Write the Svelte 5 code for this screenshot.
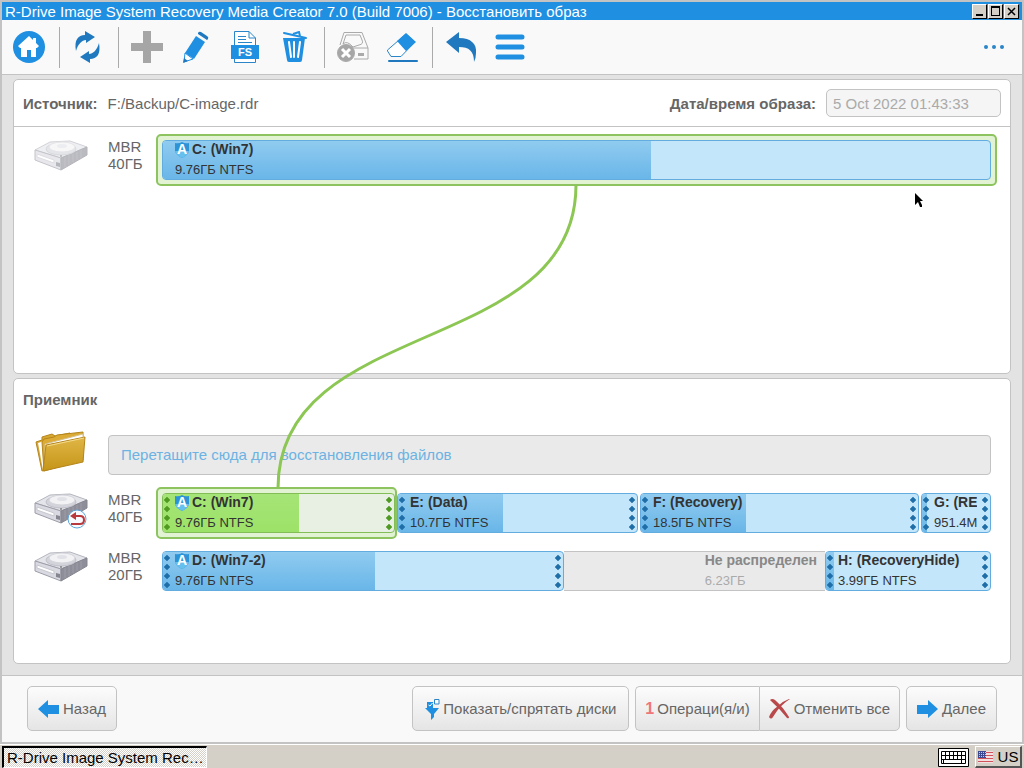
<script lang="ts">
	type Partition = {
		name: string;
		info: string;
		size: number;
		used: number;
		kind?: 'free' | 'target';
		system?: boolean;
		fixed?: boolean;
	};

	const source: Partition[] = [
		{ name: 'C: (Win7)', info: '9.76ГБ NTFS', size: 829, used: 59, system: true, fixed: true }
	];

	const disks: { label: string; size: string; restored?: boolean; gap: boolean; parts: Partition[] }[] = [
		{
			label: 'MBR',
			size: '40ГБ',
			restored: true,
			gap: true,
			parts: [
				{ name: 'C: (Win7)', info: '9.76ГБ NTFS', size: 233, used: 59, kind: 'target', system: true },
				{ name: 'E: (Data)', info: '10.7ГБ NTFS', size: 241, used: 44 },
				{ name: 'F: (Recovery)', info: '18.5ГБ NTFS', size: 279, used: 38 },
				{ name: 'G: (RE', info: '951.4M', size: 70, used: 7 }
			]
		},
		{
			label: 'MBR',
			size: '20ГБ',
			gap: false,
			parts: [
				{ name: 'D: (Win7-2)', info: '9.76ГБ NTFS', size: 402, used: 53, system: true },
				{ name: 'Не распределен', info: '6.23ГБ', size: 261, used: 0, kind: 'free' },
				{ name: 'H: (RecoveryHide)', info: '3.99ГБ NTFS', size: 166, used: 5 }
			]
		}
	];

	let imageDate = $state('5 Oct 2022 01:43:33');
	let workspace: HTMLElement;
	let width = $state(0);
	let height = $state(0);
	let link = $state('');

	function columns(parts: Partition[]) {
		return parts.map((p) => `minmax(0, ${p.size}fr)`).join(' ');
	}

	// curve between the source partition and the one it will be written to
	$effect(() => {
		if (!width || !height) return;
		const base = workspace.getBoundingClientRect();
		const from = workspace.querySelector('.part.origin')!.getBoundingClientRect();
		const to = workspace.querySelector('.part.target')!.getBoundingClientRect();
		const x1 = Math.floor(from.left + from.width / 2 - base.left);
		const y1 = from.bottom + 5 - base.top;
		const x2 = Math.floor(to.left + to.width / 2 - base.left);
		const y2 = to.top - 5 - base.top;
		const bend = (y2 - y1) * 0.57;
		link = `M${x1} ${y1} C${x1} ${y1 + bend} ${x2} ${y2 - bend} ${x2} ${y2}`;
	});
</script>

{#snippet dots()}
	<svg width="6" height="34" viewBox="0 0 6 34" fill="currentColor" aria-hidden="true">
		{#each [3, 12, 21, 30] as y}
			<path d="M3 {y - 3}L5 {y - 1}L6 {y}L5 {y + 1}L3 {y + 3}L1 {y + 1}L0 {y}L1 {y - 1}Z" stroke="currentColor" stroke-width=".5" />
		{/each}
	</svg>
{/snippet}

{#snippet part(p: Partition, origin: boolean)}
	<div class="part {p.kind ?? ''}" class:origin>
		<div class="used" style="width: {p.used}%"></div>
		{#if !p.fixed && p.kind !== 'free'}
			<span class="grip left">{@render dots()}</span>
			<span class="grip right">{@render dots()}</span>
		{/if}
		<div class="text">
			<div class="name">
				{#if p.system}
					<svg class="shield" width="14" height="17" viewBox="0 0 14 17" aria-hidden="true">
						<path d="M0 2Q4 3 7 1Q10 3 14 2V10Q13 14 7 17Q1 14 0 10Z" fill="#2c93d6" />
						<path d="M0 10H14Q13 14 7 17Q1 14 0 10Z" fill="#66c0ee" />
						<text x="7" y="13" text-anchor="middle" font-size="14" font-weight="bold" fill="#fff">A</text>
					</svg>
				{/if}
				{p.name}
			</div>
			<div class="info">{p.info}</div>
		</div>
	</div>
{/snippet}

{#snippet drive(faded: boolean, restored: boolean)}
	<svg class="drive" class:faded width="54" height="40" viewBox="0 0 54 40" aria-hidden="true">
		<path d="M1 10L16 2L36 1L53 7L27 18Z" fill="#e4e5ea" stroke="#b5b6be" stroke-linejoin="round" />
		<path d="M1 10L27 18V30L1 20Z" fill="#d9dae1" stroke="#9c9da8" stroke-linejoin="round" />
		<path d="M27 18L53 7V15L27 30Z" fill="#8d8e99" stroke="#85868f" stroke-linejoin="round" />
		<path d="M31 17V27M35 15V25M39 14V22M43 12V20M47 10V18" stroke="#9c9da7" />
		<ellipse cx="27" cy="9" rx="15" ry="6" fill="#d3d4db" stroke="#bfc0c8" />
		<ellipse cx="28" cy="7" rx="13" ry="5" fill="#f2f2f5" stroke="#d3d4da" />
		<ellipse cx="28" cy="6" rx="5" ry="2" fill="#e1e2e7" />
		<path d="M3 14L20 20V23L3 17Z" fill="#fff" stroke="#c7c8cf" />
		<path d="M22 22L26 23V27L22 26Z" fill="#85868f" />
		<path d="M26 16H28" stroke="#555" />
		{#if restored}
			<circle cx="43" cy="26" r="9" fill="#f7fbff" stroke="#5aa5dc" />
			<path d="M41 23H46Q50 23 50 27T46 31H37" fill="none" stroke="#b83a3d" stroke-width="2" />
			<path d="M42 19V27L36 23Z" fill="#b83a3d" />
		{/if}
	</svg>
{/snippet}

<div class="screen">
	<div class="window">
		<header class="titlebar">
			<span>R-Drive Image System Recovery Media Creator 7.0 (Build 7006) - Восстановить образ</span>
			<div class="controls">
				<button aria-label="Свернуть">
					<svg width="13" height="13" viewBox="0 0 13 13"><path d="M3 10H10" stroke="#000" stroke-width="2" /></svg>
				</button>
				<button aria-label="Развернуть">
					<svg width="13" height="13" viewBox="0 0 13 13"><path d="M2 1H11V11H2ZM3 3V10H10V3Z" fill-rule="evenodd" /></svg>
				</button>
				<button aria-label="Закрыть">
					<svg width="13" height="13" viewBox="0 0 13 13"><path d="M3 3L10 10M10 3L3 10" stroke="#000" stroke-width="1.500" /></svg>
				</button>
			</div>
		</header>

		<nav class="toolbar">
			<button aria-label="Домой">
				<svg width="32" height="32" viewBox="0 0 32 32">
					<circle cx="16" cy="16" r="16" fill="#1f8fe1" />
					<path d="M16 5L20 9V7H23V12L26 15L24 17H23V26H18V19H14V26H8V17H7L5 15Z" fill="#fff" />
				</svg>
			</button>
			<i></i>
			<button aria-label="Обновить">
				<svg width="32" height="32" viewBox="0 0 32 32" fill="#2079be">
					<path d="M4 20C2 9 6 4 13 4V0L23 6L14 12V9C10 9 6 13 4 20Z" />
					<path d="M4 20C2 9 6 4 13 4V0L23 6L14 12V9C10 9 6 13 4 20Z" transform="rotate(180 15.500 16)" />
				</svg>
			</button>
			<i></i>
			<button aria-label="Создать">
				<svg width="32" height="32" viewBox="0 0 32 32"><path d="M12 0H20V12H32V20H20V32H12V20H0V12H12Z" fill="#a6a6a6" /></svg>
			</button>
			<button aria-label="Изменить">
				<svg width="32" height="32" viewBox="0 0 32 32">
					<path d="M16 5L25 11L14 28L5 22Z" fill="#1f8fe1" />
					<path d="M18 2Q19 0 21 1L27 5Q29 6 28 8L27 9L18 3Z" fill="#2079be" />
					<path d="M5 22L13 28L4 31Z" fill="#fff" stroke="#1f8fe1" />
					<path d="M4 27L8 30L3 32Z" fill="#2079be" />
				</svg>
			</button>
			<button aria-label="Форматировать">
				<svg width="32" height="32" viewBox="0 0 32 32">
					<path d="M5.500 .5H20L26.500 7V31.500H5.500Z" fill="#fff" stroke="#2b86c9" />
					<path d="M20 .5V7H26.500" fill="none" stroke="#2b86c9" />
					<path d="M9 5.500H17M9 8.500H17M9 11.500H23" stroke="#2b86c9" />
					<rect x="2" y="14" width="28" height="14" fill="#1f8fe1" />
					<text x="16" y="25" text-anchor="middle" font-size="11" font-weight="bold" fill="#fff">FS</text>
				</svg>
			</button>
			<button aria-label="Удалить">
				<svg width="32" height="32" viewBox="0 0 32 32">
					<path d="M6 2L28 7" stroke="#1f8fe1" stroke-width="2" stroke-linecap="round" />
					<path d="M15 3L21 1L22 5" fill="none" stroke="#1f8fe1" stroke-width="2" />
					<path d="M5 7H27L24 29Q24 31 22 31H11Q9 31 9 29Z" fill="#1f8fe1" />
					<path d="M11 11L13 26M16 11V26M22 11L20 26" stroke="#fff" stroke-width="2" stroke-linecap="round" />
				</svg>
			</button>
			<i></i>
			<button aria-label="Отключить диск">
				<svg width="32" height="32" viewBox="0 0 32 32" fill="none" stroke="#aaa">
					<path d="M7 1.500H25L31 17V28H17M7 1.500L3 14M12 17H31" />
					<path d="M9 4H23L25 9Q27 13 22 14L16 16Q10 9 6 13Z" />
					<path d="M21 23.500H27" stroke-width="3" />
					<circle cx="9" cy="22" r="8.500" fill="#a6a6a6" />
					<path d="M5 18L13 26M13 18L5 26" stroke="#fff" stroke-width="3" />
				</svg>
			</button>
			<button aria-label="Стереть">
				<svg width="32" height="32" viewBox="0 0 32 32">
					<path d="M1.500 19L20 3L29 11L15 25.500H5L1.500 20Z" fill="#fff" stroke="#2b86c9" />
					<path d="M20 2L30 11L20 20L11 10Z" fill="#1f8fe1" />
					<path d="M3 30H31" stroke="#2079be" stroke-width="2" stroke-linecap="round" />
				</svg>
			</button>
			<i></i>
			<button aria-label="Вернуть">
				<svg width="32" height="32" viewBox="0 0 32 32"><path d="M1 11L14 1V7C26 7 32 13 31 22Q31 27 29 31C29 20 24 16 14 16V22Z" fill="#2079be" /></svg>
			</button>
			<button aria-label="Меню">
				<svg width="32" height="32" viewBox="0 0 32 32"><path d="M4 6H28M4 16H28M4 26H28" stroke="#1f8fe1" stroke-width="5" stroke-linecap="round" /></svg>
			</button>
			<button class="more" aria-label="Ещё">
				<svg width="32" height="32" viewBox="0 0 32 32" fill="#2b86c9">
					<circle cx="8" cy="16" r="2" /><circle cx="16" cy="16" r="2" /><circle cx="24" cy="16" r="2" />
				</svg>
			</button>
		</nav>

		<main class="workspace" bind:this={workspace} bind:clientWidth={width} bind:clientHeight={height}>
			<section class="panel source">
				<div class="panel-head">
					<b>Источник:</b>
					<span>F:/Backup/C-image.rdr</span>
					<label for="image-date">Дата/время образа:</label>
					<input id="image-date" type="text" bind:value={imageDate} readonly />
				</div>
				<div class="rows">
					<div class="row">
						{@render drive(true, false)}
						<div class="disk">MBR<br />40ГБ</div>
						<div class="bar" style="grid-template-columns: {columns(source)}">
							{#each source as p}
								{@render part(p, true)}
							{/each}
						</div>
					</div>
				</div>
			</section>

			<section class="panel receiver">
				<h2>Приемник</h2>
				<div class="rows">
					<div class="row files">
						<svg class="folder" width="54" height="44" viewBox="0 0 54 44" aria-hidden="true">
							<defs>
								<linearGradient id="gold" x1="0" y1="0" x2="0" y2="1">
									<stop offset="0" stop-color="#e0b646" />
									<stop offset="1" stop-color="#c59518" />
								</linearGradient>
							</defs>
							<path d="M2 12L8 10V7L18 4L21 6L36 3L37 30L8 41Z" fill="#d8a930" stroke="#b5851c" />
							<path d="M4 13L10 11L12 40L9 40Z" fill="#fff" />
							<path d="M8 12L10 9L20 7L23 5L49 2L49 30L10 41Z" fill="#dbab35" stroke="#b5851c" />
							<path d="M11 14L49 4V30L11 40Z" fill="#fff" stroke="#d6c08a" />
							<path d="M12 15L51 7L49 32L9 41Z" fill="url(#gold)" stroke="#b5851c" stroke-linejoin="round" />
							<path d="M13 16L50 8" stroke="#f3dc8e" />
						</svg>
						<div class="drop">Перетащите сюда для восстановления файлов</div>
					</div>
					{#each disks as d}
						<div class="row">
							{@render drive(false, !!d.restored)}
							<div class="disk">{d.label}<br />{d.size}</div>
							<div class="bar" class:gap={d.gap} style="grid-template-columns: {columns(d.parts)}">
								{#each d.parts as p}
									{@render part(p, false)}
								{/each}
							</div>
						</div>
					{/each}
				</div>
			</section>

			<svg class="link" aria-hidden="true"><path d={link} /></svg>
			<svg class="pointer" width="12" height="16" viewBox="0 0 12 16" aria-hidden="true">
				<path d="M0 0V12L3 9L5 14H7V12L5 8H8Z" />
			</svg>
		</main>

		<footer class="actions">
			<button class="back">
				<svg width="22" height="18" viewBox="0 0 22 18"><path d="M0 9L10 0V5H21V14H10V18Z" fill="#1f8fe1" /></svg>
				Назад
			</button>
			<button class="filter">
				<svg width="15" height="22" viewBox="0 0 15 22">
					<path d="M2 4H8V10H2Z" fill="#1f8fe1" />
					<path d="M3.500 7L5 8L7.500 5" fill="none" stroke="#fff" />
					<path d="M9.500 1.500H14V6H9.500Z" fill="#fff" stroke="#2b86c9" />
					<path d="M0 10H14L9 16V19L6 22V16Z" fill="#1f8fe1" />
				</svg>
				Показать/спрятать диски
			</button>
			<div class="group">
				<button><b>1</b>Операци(я/и)</button>
				<button>
					<svg width="22" height="22" viewBox="0 0 22 22" fill="#b9484b">
						<path d="M1 2Q3 0 6 2Q14 9 20 19Q20 21 18 20Q10 10 1 2Z" />
						<path d="M21 1Q11 7 4 19Q2 22 0 19Q2 13 9 8Q14 3 20 1Z" />
					</svg>
					Отменить все
				</button>
			</div>
			<button class="next">
				<svg width="22" height="18" viewBox="0 0 22 18"><path d="M21 9L11 0V5H0V14H11V18Z" fill="#1f8fe1" /></svg>
				Далее
			</button>
		</footer>
	</div>

	<div class="taskbar">
		<button class="task">R-Drive Image System Rec…</button>
		<svg class="keyboard" width="31" height="19" viewBox="0 0 31 19" aria-hidden="true">
			<path d="M.5 .5H30.500V18.500H.5Z" fill="#fff" stroke="#000" />
			<path d="M3.500 3.500H27.500V15.500H3.500ZM3 7.500H28M3 11.500H28M7.500 3V11M11.500 3V11M15.500 3V11M19.500 3V11M23.500 3V15M5.500 11V15" fill="none" stroke="#000" />
		</svg>
		<button class="lang">
			<svg width="15" height="12" viewBox="0 0 15 12" aria-hidden="true">
				<path d="M0 0H15V12H0Z" fill="#f3dfe0" />
				<path d="M0 1.500H15M0 4.500H15M0 7.500H15M0 10.500H15" stroke="#d0525a" />
				<path d="M0 0H8V7H0Z" fill="#3c4a94" />
				<path d="M1 1.500H8M1 3.500H8M1 5.500H8" stroke="#c4c9e8" stroke-dasharray="1 1" />
			</svg>
			US
		</button>
	</div>
</div>

<style>
	:global(body) {
		margin: 0;
	}

	.screen {
		display: flex;
		flex-direction: column;
		min-height: 100vh;
		background: #d4d0c8;
		color: #666;
		font: 15px/17px "Liberation Sans", Arial, sans-serif;
	}

	.screen * {
		box-sizing: border-box;
	}

	svg {
		display: block;
		flex: none;
	}

	button {
		display: flex;
		align-items: center;
		justify-content: center;
		padding: 0;
		border: 0;
		background: none;
		color: inherit;
		font: inherit;
		white-space: nowrap;
	}

	.window {
		display: flex;
		flex: 1;
		flex-direction: column;
		border: 2px solid #c3c3c3;
	}

	.titlebar {
		display: flex;
		align-items: center;
		height: 18px;
		padding: 0 3px;
		background: #1f8fe1;
		color: #fff;
	}

	.controls {
		display: flex;
		gap: 1px;
		margin-left: auto;
	}

	.controls button {
		width: 15px;
		height: 15px;
		background: #d4d0c8;
		border: 1px solid;
		border-color: #fff #000 #000 #fff;
	}

	.toolbar {
		display: flex;
		align-items: center;
		height: 55px;
		padding: 0 4px 0 2px;
		background: #f9f9f9;
		border-bottom: 1px solid #c3c3c3;
	}

	.toolbar button {
		width: 49px;
		height: 48px;
	}

	.toolbar i {
		width: 1px;
		height: 41px;
		margin: 0 3px 0 6px;
		background: #aaa;
	}

	.toolbar .more {
		margin-left: auto;
	}

	.workspace {
		position: relative;
		display: flex;
		flex: 1;
		flex-direction: column;
		gap: 4px;
		padding: 4px 11px 11px;
		background: #e3e3e3;
	}

	.panel {
		background: #fff;
		border: 1px solid #c3c3c3;
		border-radius: 5px;
	}

	.source {
		flex: 1;
	}

	.panel-head {
		display: flex;
		align-items: center;
		gap: 10px;
		height: 47px;
		padding: 0 9px;
		border-bottom: 1px solid #c3c3c3;
	}

	.panel-head label {
		margin-left: auto;
		font-weight: bold;
	}

	.panel-head input {
		width: 175px;
		height: 28px;
		padding: 0 6px;
		border: 1px solid #c3c3c3;
		border-radius: 5px;
		background: #f5f5f5;
		color: #aaa;
		font: inherit;
	}

	h2 {
		margin: 0;
		padding: 0 9px;
		font-size: 15px;
		line-height: 42px;
	}

	.rows {
		display: grid;
		gap: 18px;
		padding: 13px 19px 0 20px;
	}

	.receiver .rows {
		padding-top: 14px;
		padding-bottom: 72px;
	}

	.row {
		display: grid;
		grid-template-rows: 40px;
		grid-template-columns: 74px 54px 1fr;
	}

	.files {
		grid-template-columns: 74px 1fr;
	}

	.folder {
		margin-top: -5px;
	}

	.faded {
		opacity: 0.6;
	}

	.disk {
		margin-top: -2px;
	}

	.drop {
		padding: 0 12px;
		border: 1px solid #c3c3c3;
		border-radius: 4px;
		background: #eaeaea;
		color: #6cb3e3;
		line-height: 38px;
	}

	.bar {
		position: relative;
		z-index: 0;
		display: grid;
		grid-template-rows: 40px;
		min-width: 0;
	}

	.bar.gap {
		gap: 2px;
	}

	.part {
		position: relative;
		padding: 0 13px 0 12px;
		border: 1px solid #63ace0;
		border-radius: 4px;
		background: #c4e6fb;
		color: #333;
	}

	.used {
		position: absolute;
		inset: 0 auto 0 0;
		border-radius: 3px 0 0 3px;
		background: linear-gradient(#90cbf0, #69b6e8);
	}

	.grip {
		position: absolute;
		top: 3px;
		color: #1f6ea8;
	}

	.grip.left {
		left: 1px;
	}

	.grip.right {
		right: 2px;
	}

	.origin::before,
	.target::before {
		content: "";
		position: absolute;
		z-index: -1;
		inset: -7px;
		border: 2px solid #8dc45f;
		border-radius: 5px;
		background: #e1f3d3;
	}

	.target::before {
		right: -3px;
	}

	.target {
		border-color: #83bd58;
		background: #e7f0e3;
	}

	.target .used {
		background: linear-gradient(#a5e477, #9de268);
	}

	.target .grip {
		color: #4f9a20;
	}

	.free {
		display: flex;
		justify-content: flex-end;
		padding-right: 8px;
		border-color: #c3c3c3;
		border-width: 1px 0;
		border-radius: 0;
		background: #eaeaea;
		color: #aaa;
	}

	.text {
		position: relative;
		overflow: hidden;
		white-space: nowrap;
	}

	.name {
		display: flex;
		gap: 3px;
		height: 17px;
		font-size: 14px;
		font-weight: bold;
		line-height: 16px;
	}

	.free .name {
		color: #888;
	}

	.info {
		margin-top: 2px;
		font-size: 13px;
		line-height: 19px;
	}

	.link {
		position: absolute;
		inset: 0;
		width: 100%;
		height: 100%;
		fill: none;
		stroke: #8cc653;
		stroke-width: 3;
		pointer-events: none;
	}

	.pointer {
		position: absolute;
		top: 118px;
		right: 95px;
		pointer-events: none;
	}

	.actions {
		display: flex;
		gap: 6px;
		padding: 10px 25px 11px;
		border-top: 1px solid #c3c3c3;
		background: #f9f9f9;
	}

	.actions button {
		gap: 3px;
		height: 45px;
		padding: 0 9px;
		border: 1px solid #c3c3c3;
		border-radius: 5px;
		background: linear-gradient(#fcfcfc, #e5e5e5);
	}

	.actions .back,
	.actions .next {
		padding: 0 10px;
	}

	.actions .back {
		margin-right: auto;
	}

	.actions .filter {
		padding: 0 12px;
	}

	.group {
		display: flex;
	}

	.group b {
		color: #f0757b;
		font-size: 16px;
	}

	.group button:first-child {
		border-right: 0;
		border-radius: 5px 0 0 5px;
	}

	.group button:last-child {
		border-radius: 0 5px 5px 0;
	}

	.taskbar {
		display: flex;
		align-items: center;
		height: 24px;
		padding: 1px 2px 0;
		border-top: 1px solid #fff;
		color: #000;
	}

	.task {
		height: 22px;
		padding: 0 2px 0 3px;
		border: solid;
		border-width: 2px 1px 1px 2px;
		border-color: #000 #fff #fff #000;
		background: repeating-conic-gradient(#d4d0c8 0 25%, #fff 0 50%) 0 0 / 2px 2px;
	}

	.keyboard {
		margin: 0 6px 0 auto;
	}

	.lang {
		gap: 5px;
		width: 47px;
		height: 22px;
		border: solid;
		border-width: 1px 2px 2px 1px;
		border-color: #fff #555 #555 #fff;
	}
</style>
